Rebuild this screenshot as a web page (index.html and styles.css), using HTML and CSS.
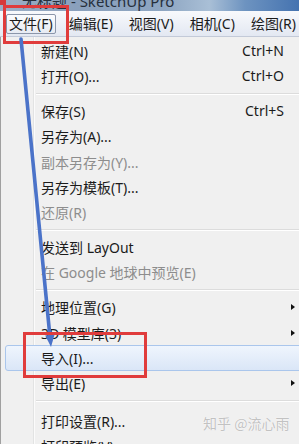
FILE: index.html
```html
<!DOCTYPE html>
<html lang="zh-CN">
<head>
<meta charset="utf-8">
<title>SketchUp 文件菜单</title>
<link rel="stylesheet" href="styles.css">
</head>
<body>
<div class="window">
  <div class="titlebar">
    <span class="app-icon"></span>
    <span class="title">无标题 - SketchUp Pro</span>
  </div>
  <nav class="menubar">
    <span class="menu active">文件(F)</span>
    <span class="menu">编辑(E)</span>
    <span class="menu">视图(V)</span>
    <span class="menu">相机(C)</span>
    <span class="menu">绘图(R)</span>
  </nav>
  <div class="dropdown">
    <div class="item"><span class="label">新建(N)</span><span class="key">Ctrl+N</span><span class="sub"></span></div>
    <div class="item"><span class="label">打开(O)...</span><span class="key">Ctrl+O</span><span class="sub"></span></div>
    <div class="sep"></div>
    <div class="item"><span class="label">保存(S)</span><span class="key">Ctrl+S</span><span class="sub"></span></div>
    <div class="item"><span class="label">另存为(A)...</span><span class="sub"></span></div>
    <div class="item disabled"><span class="label">副本另存为(Y)...</span><span class="sub"></span></div>
    <div class="item"><span class="label">另存为模板(T)...</span><span class="sub"></span></div>
    <div class="item disabled"><span class="label">还原(R)</span><span class="sub"></span></div>
    <div class="sep"></div>
    <div class="item"><span class="label">发送到 LayOut</span><span class="sub"></span></div>
    <div class="item disabled"><span class="label">在 Google 地球中预览(E)</span><span class="sub"></span></div>
    <div class="sep"></div>
    <div class="item"><span class="label">地理位置(G)</span><span class="sub arrow"></span></div>
    <div class="item"><span class="label">3D 模型库(3)</span><span class="sub arrow"></span></div>
    <div class="item hover"><span class="label">导入(I)...</span><span class="sub"></span></div>
    <div class="item"><span class="label">导出(E)</span><span class="sub arrow"></span></div>
    <div class="sep sep-wide"></div>
    <div class="item"><span class="label">打印设置(R)...</span><span class="sub"></span></div>
    <div class="item"><span class="label">打印预览(V)</span><span class="sub"></span></div>
  </div>
  <svg class="annot" width="299" height="444" viewBox="0 0 299 444" aria-hidden="true">
    <rect x="4.5" y="6.5" width="63" height="36" fill="none" stroke="#e03c3c" stroke-width="3"/>
    <line x1="21" y1="39" x2="49.9" y2="336" stroke="#4b73c9" stroke-width="3.6" stroke-linecap="round"/>
    <polygon points="51,347 54.6,334.5 45.2,335.4" fill="#4b73c9"/>
    <rect x="24.5" y="333.5" width="121" height="43" fill="none" stroke="#e03c3c" stroke-width="3"/>
  </svg>
  <div class="watermark">知乎 @流心雨</div>
</div>
</body>
</html>
```
FILE: styles.css
```css
html, body {
  margin: 0;
  padding: 0;
  width: 299px;
  height: 444px;
  overflow: hidden;
  background: #f0f0f0;
}

.window {
  position: relative;
  width: 299px;
  height: 444px;
  overflow: hidden;
  font-family: "Noto Sans", "Noto Sans CJK SC", sans-serif;
  font-size: 14px;
  color: #1b1b1b;
}

.titlebar {
  height: 11px;
  display: flex;
  overflow: hidden;
  background: linear-gradient(to right, #9eb0c6 0%, #8aa0bc 25%, #8ea6c2 55%, #a9bfd6 70%, #6d93c0 82%, #4573b0 100%);
}

.app-icon {
  flex: none;
  width: 6px;
  height: 5px;
  background: #d63a3a;
}

.title {
  margin-left: 16px;
  margin-top: -7px;
  font-size: 15px;
  line-height: 16px;
  color: #27303c;
  white-space: nowrap;
}

.menubar {
  height: 25px;
  border-bottom: 1px solid #c3cad8;
  background: linear-gradient(#f8f9fc, #e3e8f2);
  display: flex;
  align-items: center;
  padding-left: 1px;
}

.menu {
  margin: 0 5px;
  padding: 0 2px;
  height: 18px;
  line-height: 18px;
  border: 1px solid transparent;
  border-radius: 2px;
  white-space: nowrap;
}

.menu.active {
  border-color: #8b96aa;
  background: linear-gradient(#fbfcfe, #e7ebf3);
}

.dropdown {
  width: 304px;
  padding-top: 1px;
  border-left: 1px solid #a0a0a0;
  background:
    linear-gradient(to right, transparent 32px, #e2e3e3 32px, #e2e3e3 33px, #fbfbfb 33px, #fbfbfb 34px, transparent 34px),
    #f0f0f0;
}

.item {
  box-sizing: border-box;
  height: 25.3px;
  margin-left: 4px;
  padding: 0 10px 0 36px;
  display: flex;
  align-items: center;
  white-space: nowrap;
}

.item.disabled {
  color: #8d8d8d;
}

.item.hover {
  border: 1px solid #aac6ec;
  border-radius: 3px;
  padding: 0 9px 0 35px;
  background: linear-gradient(#eff5fd, #dae6f7);
}

.label {
  flex: 1;
}

.key {
  margin-right: 7px;
}

.sub {
  flex: none;
  width: 4px;
  height: 7px;
}

.sub.arrow {
  width: 0;
  height: 0;
  border-left: 4px solid #111;
  border-top: 3.5px solid transparent;
  border-bottom: 3.5px solid transparent;
}

.sep {
  height: 9.7px;
  margin-left: 35px;
  background: linear-gradient(to bottom, transparent 4px, #dcdcdc 4px, #dcdcdc 5px, #ffffff 5px, #ffffff 6px, transparent 6px);
}

.sep.sep-wide {
  height: 12px;
}

.annot {
  position: absolute;
  left: 0;
  top: 0;
  pointer-events: none;
}

.watermark {
  position: absolute;
  left: 203px;
  top: 413px;
  font-family: "Noto Sans CJK SC", sans-serif;
  font-size: 14px;
  color: #c2c2c2;
  text-shadow: 0 0 1px #ffffff, 0 0 1px #ffffff;
  white-space: nowrap;
}
```
